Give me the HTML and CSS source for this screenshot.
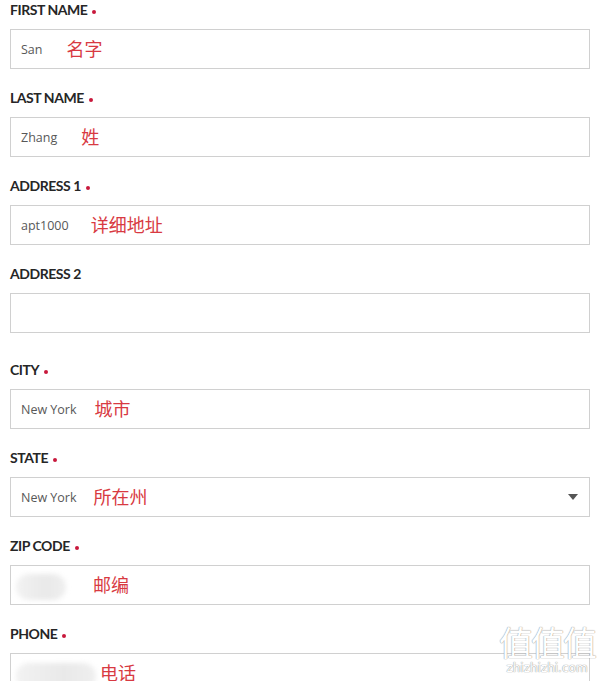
FILE: index.html
```html
<!DOCTYPE html>
<html lang="zh">
  <head>
    <meta charset="utf-8" />
    <title>Shipping Address</title>
    <link rel="stylesheet" href="styles.css">
  </head>
  <body>
    <form class="address-form">
      <div class="field">
        <label class="field-label">FIRST NAME<span class="req"></span></label>
        <div class="input">
          <span class="value">San</span><span class="note note-first">名字</span>
        </div>
      </div>

      <div class="field">
        <label class="field-label">LAST NAME<span class="req"></span></label>
        <div class="input">
          <span class="value">Zhang</span><span class="note note-last">姓</span>
        </div>
      </div>

      <div class="field">
        <label class="field-label">ADDRESS 1<span class="req"></span></label>
        <div class="input">
          <span class="value">apt1000</span><span class="note note-addr">详细地址</span>
        </div>
      </div>

      <div class="field field-loose">
        <label class="field-label">ADDRESS 2</label>
        <div class="input"></div>
      </div>

      <div class="field">
        <label class="field-label">CITY<span class="req"></span></label>
        <div class="input">
          <span class="value">New York</span><span class="note note-city">城市</span>
        </div>
      </div>

      <div class="field">
        <label class="field-label">STATE<span class="req"></span></label>
        <div class="input select">
          <span class="value">New York</span><span class="note note-state">所在州</span>
          <span class="caret"></span>
        </div>
      </div>

      <div class="field">
        <label class="field-label">ZIP CODE<span class="req"></span></label>
        <div class="input">
          <span class="blur blur-zip"></span><span class="note note-zip">邮编</span>
        </div>
      </div>

      <div class="field">
        <label class="field-label">PHONE<span class="req"></span></label>
        <div class="input">
          <span class="blur blur-phone"></span><span class="note note-phone">电话</span>
        </div>
      </div>
    </form>

    <div class="watermark">
      <div class="wm-mark">值值值</div>
      <div class="wm-url">zhizhizhi.com</div>
    </div>
  </body>
</html>
```

FILE: styles.css
```css
html, body {
  margin: 0;
  background: #fff;
}
body {
  width: 600px;
  height: 681px;
  overflow: hidden;
  position: relative;
  font-family: "Open Sans", "Noto Sans CJK SC", sans-serif;
}
.address-form {
  padding: 1px 10px 0;
}
.field {
  margin-bottom: 20px;
}
.field-loose {
  margin-bottom: 28px;
}
.field-label {
  display: flex;
  align-items: center;
  height: 17px;
  margin-bottom: 11px;
  font-family: Lato, "Liberation Sans", sans-serif;
  font-weight: 700;
  font-size: 14px;
  letter-spacing: -0.45px;
  color: #262626;
}
.req {
  width: 4px;
  height: 4px;
  border-radius: 50%;
  background: #c8183c;
  margin: 5px 0 0 5px;
}
.input {
  height: 40px;
  box-sizing: border-box;
  border: 1px solid #d0d0d0;
  display: flex;
  align-items: center;
  padding: 0 10px;
}
.value {
  font-size: 12.5px;
  color: #585858;
}
.note {
  font-family: "Noto Sans CJK SC", sans-serif;
  font-size: 18px;
  color: #d83a42;
  margin-top: -2px;
}
.note-first { margin-left: 24px; }
.note-last { margin-left: 24px; }
.note-addr { margin-left: 22px; }
.note-city { margin-left: 18px; }
.note-state { margin-left: 17px; }
.note-zip { margin-left: 27px; }
.note-phone { margin-left: 4px; }
.select {
  position: relative;
}
.caret {
  margin-left: auto;
  margin-right: 1px;
  width: 0;
  height: 0;
  border-left: 5px solid transparent;
  border-right: 5px solid transparent;
  border-top: 6px solid #555;
}
.blur {
  display: block;
  height: 26px;
  border-radius: 13px;
  background: linear-gradient(90deg, #f2f2f2, #e9e9e9 60%, #efefef);
  filter: blur(2.5px);
  margin-left: -5px;
  margin-top: 4px;
}
.blur-zip { width: 50px; }
.blur-phone { width: 80px; margin-top: 6px; }
.watermark {
  position: absolute;
  right: 5px;
  bottom: 6px;
  text-align: center;
  color: #fff;
  text-shadow: 0 0 1px #999, 0 0 1px #999;
}
.wm-mark {
  font-family: "Noto Sans CJK SC", sans-serif;
  font-size: 34px;
  line-height: 38px;
  letter-spacing: -2px;
}
.wm-url {
  font-family: "DejaVu Sans", sans-serif;
  font-size: 12px;
  line-height: 14px;
}
```
